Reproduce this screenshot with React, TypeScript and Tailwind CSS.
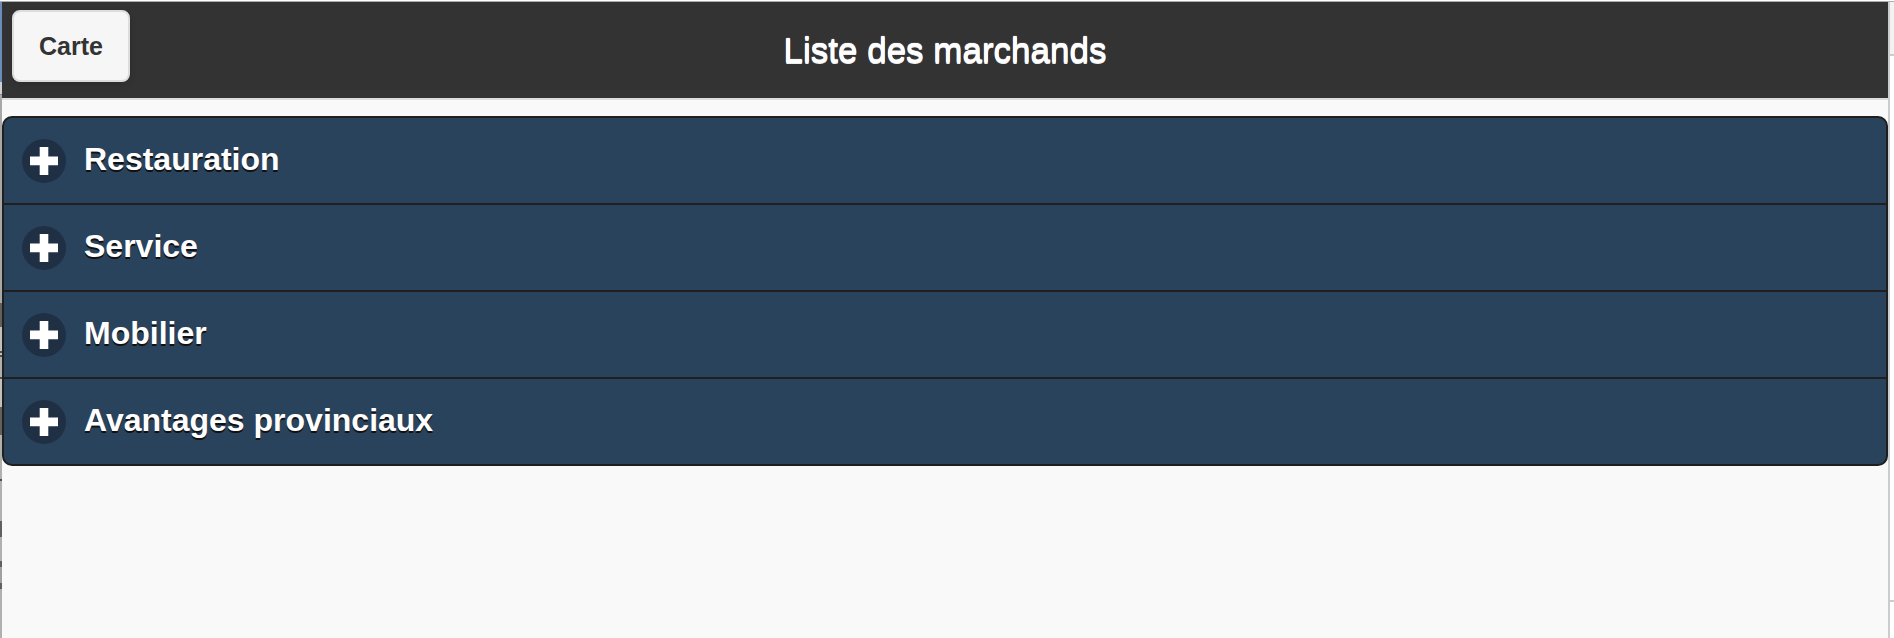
const categories = ["Restauration", "Service", "Mobilier", "Avantages provinciaux"];

function PlusIcon() {
  return (
    <svg className="size-11 shrink-0" viewBox="0 0 44 44" aria-hidden="true">
      <circle cx="22" cy="22" r="22" fill="#1f3044" />
      <path d="M17.7 8h8.600v9.500h9.700v8.800h-9.700v9.700h-8.600v-9.700h-9.700v-8.800h9.700z" fill="#fff" />
    </svg>
  );
}

function MapEdge() {
  return (
    <div className="flex w-0.5 shrink-0 flex-col bg-[#b0b0b0]" aria-hidden="true">
      <div className="h-20 bg-[#6c8cba]" />
      <div className="h-3 bg-[#d0d0d0]" />
      <div className="h-px bg-[#888888]" />
      <div className="h-52 bg-[#a8a8a8]" />
      <div className="h-6 bg-[#606060]" />
      <div className="h-6 bg-[#c0c0c0]" />
      <div className="h-0.5 bg-[#505050]" />
      <div className="h-0.5 bg-[#c0c0c0]" />
      <div className="h-0.5 bg-[#505050]" />
      <div className="h-5 bg-[#b0b0b0]" />
      <div className="h-0.5 bg-[#505050]" />
      <div className="h-7 bg-[#c0c0c0]" />
      <div className="h-7 bg-[#606060]" />
      <div className="h-11 bg-[#b0b0b0]" />
      <div className="h-0.5 bg-[#505050]" />
      <div className="h-10 bg-[#b0b0b0]" />
      <div className="h-4 bg-[#606060]" />
      <div className="h-6 bg-[#b0b0b0]" />
      <div className="h-1.5 bg-[#606060]" />
      <div className="h-4 bg-[#a0a0a0]" />
      <div className="h-1.5 bg-[#606060]" />
    </div>
  );
}

function SideEdge() {
  return (
    <div className="flex w-1.5 shrink-0 flex-col border-l-2 border-[#cccccc] bg-white" aria-hidden="true">
      <div className="h-[54px] border-b-2 border-[#cccccc] bg-[#f2f2f2]" />
      <div className="h-[546px] border-b-2 border-[#cccccc]" />
    </div>
  );
}

export default function App() {
  return (
    <div className="flex min-h-screen flex-col bg-white pt-px font-['Liberation_Sans',Arial,sans-serif]">
      <div className="flex grow border-t border-[#a9aeb1]">
        <MapEdge />
        <div className="min-w-0 grow bg-[#f9f9f9]">
          <header className="grid grid-cols-[1fr_auto_1fr] border-b-2 border-[#dddddd] bg-[#333333] px-2.5 pt-2 pb-4">
            <button
              type="button"
              className="justify-self-start rounded-lg border-2 border-[#dddddd] bg-[#f6f6f6] px-[25px] py-[18px] text-[25px] leading-8 font-bold text-[#333333] shadow-[0_2px_6px_rgba(0,0,0,0.15)]"
            >
              Carte
            </button>
            <h1 className="pt-5 text-[35px] leading-10 text-white [text-shadow:0_0_1px_#ffffff,0_1px_0_#ffffff,0_2px_0_#eeeeee]">
              Liste des marchands
            </h1>
          </header>
          <main className="pt-4">
            <ul className="divide-y-2 divide-[#1f1f1f] overflow-hidden rounded-[10px] border-2 border-[#1f1f1f] bg-[#2a435c]">
              {categories.map((name) => (
                <li key={name}>
                  <button
                    type="button"
                    aria-expanded="false"
                    className="flex h-[85px] w-full items-center gap-[18px] px-[18px] text-left text-[32px] leading-10 font-bold text-white [text-shadow:0_2px_0_#111111]"
                  >
                    <PlusIcon />
                    <span className="pb-1">{name}</span>
                  </button>
                </li>
              ))}
            </ul>
          </main>
        </div>
        <SideEdge />
      </div>
    </div>
  );
}
